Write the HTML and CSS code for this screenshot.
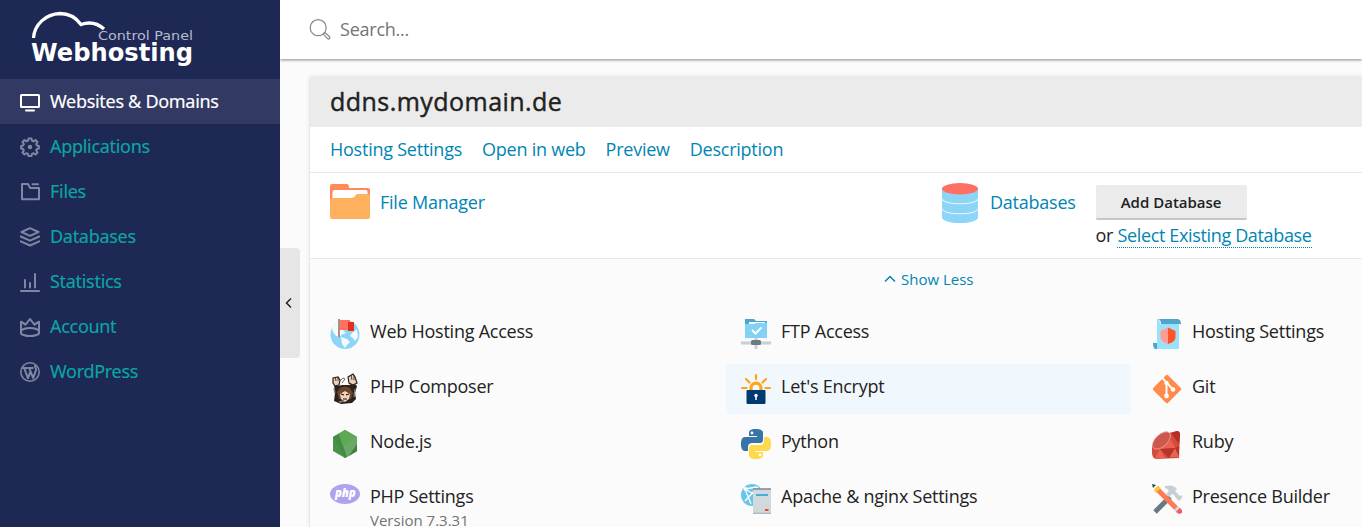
FILE: index.html
```html
<!DOCTYPE html>
<html lang="en">
<head>
<meta charset="utf-8">
<title>Websites &amp; Domains</title>
<link rel="stylesheet" href="styles.css">
</head>
<body>
<div class="app">
  <aside class="sidebar">
    <div class="brand">
      <svg width="280" height="79" viewBox="0 0 280 79">
        <path d="M33.500 38A27.500 26 0 0 1 60 13.500Q73 13.500 81 24.500Q94 20 104 29" fill="none" stroke="#fff" stroke-width="3.300"/>
        <text class="brand-small" x="98" y="39.500" textLength="95" lengthAdjust="spacingAndGlyphs">Control Panel</text>
        <text class="brand-big" x="31" y="61" textLength="162" lengthAdjust="spacingAndGlyphs">Webhosting</text>
      </svg>
    </div>
    <nav class="nav">
      <a class="nav-item active"><svg class="nav-icon" viewBox="0 0 20 20"><rect x="1" y="3" width="18" height="12" rx=".5"/><path d="M6 18.500h8"/></svg><span>Websites &amp; Domains</span></a>
      <a class="nav-item"><svg class="nav-icon" viewBox="0 0 20 20"><path d="M8.500 1.500h3l.5 2.200 1.500.7 2-1.400 2 2-1.300 2 .7 1.500 2 .5v2.500l-2 .5-.7 1.500 1.300 2-2 2-2-1.300-1.500.7-.5 2.100h-3l-.5-2.100-1.500-.7-2 1.300-2-2 1.300-2-.7-1.500-2-.5V9l2-.5.7-1.500-1.300-2 2-2 2 1.400 1.500-.7z"/><circle cx="10" cy="10" r="1.500" fill="currentColor" stroke-width="1.500"/></svg><span>Applications</span></a>
      <a class="nav-item"><svg class="nav-icon" viewBox="0 0 20 20"><path d="M2 17V2h6l2.200 4H19v11.300H2zM12.500 2.200h5.500"/></svg><span>Files</span></a>
      <a class="nav-item"><svg class="nav-icon" viewBox="0 0 20 20"><path d="M10 1.200L18.500 5 10 8.800 1.500 5zM.7 9.500L10 13.700l9.300-4.200M.7 14.300l9.300 4.200 9.300-4.200"/></svg><span>Databases</span></a>
      <a class="nav-item"><svg class="nav-icon" viewBox="0 0 20 20"><path d="M1 19h18M5 8v7.500M10 11v4.500M15 2v13.500"/></svg><span>Statistics</span></a>
      <a class="nav-item"><svg class="nav-icon" viewBox="0 0 20 20"><path d="M1 16.500V4.700l4.500 3L10 2l4.500 5.700 4.500-3v11.800c-3 3.300-15 3.300-18 0z"/><path d="M1 14c3-4 15-4 18 0"/></svg><span>Account</span></a>
      <a class="nav-item"><svg class="nav-icon" viewBox="0 0 20 20"><circle cx="10" cy="10" r="9.200" stroke-width="1.600"/><path d="M2.800 6h4M8.300 6h4.500M4.200 6.200l3.800 10 2.500-6.800M9.300 6.200l3.900 10 2.800-8c.6-2-1-2.600-1-4.200" stroke-width="2"/></svg><span>WordPress</span></a>
    </nav>
  </aside>
  <main class="main">
    <header class="topbar">
      <svg width="22" height="22" viewBox="0 0 22 22" fill="none" stroke="#858585" stroke-width="1.200"><circle cx="9.200" cy="8.700" r="8"/><path d="M15 14.500l1-1 4.500 4.200c1.200 1.200-.7 3-1.900 1.900l-4.400-4.500 1-1"/></svg>
      <span>Search...</span>
    </header>
    <section class="panel">
      <h1 class="panel-title"><span>ddns.mydomain.de</span></h1>
      <div class="links"><a>Hosting Settings</a><a>Open in web</a><a>Preview</a><a>Description</a></div>
      <div class="features">
        <div class="feature">
          <svg class="big-icon" viewBox="0 0 40 40"><path d="M0 3q0-2 2-2h15q2 0 2 4h19q2 0 2 2v15H0z" fill="#ff8a57"/><path d="M2.500 16V9q0-2 2-2h31q2 0 2 2v5z" fill="#fff"/><path d="M0 17q0-2 2-2h20q2 0 3-2 1-2 3-2h10q2 0 2 2v21q0 2-2 2H2q-2 0-2-2z" fill="#ffb05e"/></svg>
          <a>File Manager</a>
        </div>
        <div class="feature">
          <svg class="big-icon" viewBox="0 0 40 40"><path d="M2 6v28c0 8 36 8 36 0V6z" fill="#8cd5f7"/><path d="M2 15.500c0 7 36 7 36 0M2 25.500c0 7 36 7 36 0" fill="none" stroke="#e6f8ff" stroke-width="1.100"/><ellipse cx="20" cy="5.700" rx="18" ry="5.700" fill="#ff6f62"/></svg>
          <a>Databases</a>
          <div class="db-actions">
            <button class="button">Add Database</button>
            <div>or <a class="dotted">Select Existing Database</a></div>
          </div>
        </div>
      </div>
      <div class="toggle"><svg width="12" height="8" viewBox="0 0 12 8"><path d="M1 6.500l5-5 5 5" fill="none" stroke="#0085b3" stroke-width="1.500"/></svg><a>Show Less</a></div>
      <div class="grid">
        <div class="tile">
          <svg class="icon" viewBox="0 0 30 30"><circle cx="15" cy="15.500" r="14.500" fill="#8cd5f7"/><path d="M2 9C4 5 7 3 9 2l4 9 3 3-5 2-1 2-4-1-3-4zM11 18l6 2 3 3-3 3-2 3-3-4zM22 14l5-4 1 8-3 4-2-3-3-2z" fill="#f3fbff"/><path d="M9 0v18" stroke="#a37b68" stroke-width="1.700"/><path d="M10 1h10v10H10z" fill="#ff6f62"/><path d="M18 3h6v9h-6z" fill="#e53018"/></svg>
          <div>Web Hosting Access</div>
        </div>
        <div class="tile">
          <svg class="icon" viewBox="0 0 30 30"><path d="M4 0h9l2 2h11v4H4z" fill="#4ea6cd"/><path d="M8 3h16v3H8z" fill="#fff"/><path d="M4 5h9l2-1h11v15H4z" fill="#82d2f5"/><path d="M11 11l3.500 3.500 6-6" fill="none" stroke="#fff" stroke-width="2"/><path d="M15 19v11M0 24h30" stroke="#c7d0d5" stroke-width="3"/><rect x="10" y="21" width="10" height="5" rx="1.500" fill="#6c7b82"/></svg>
          <div>FTP Access</div>
        </div>
        <div class="tile">
          <svg class="icon" viewBox="0 0 30 30"><path d="M1 24h4v6H3q-2-1-2-6z" fill="#4ea6cd"/><path d="M5 0v30h22V5H8Q8 0 5 0z" fill="#9ce1fb"/><path d="M5 0h21q3 1 3 5H9Q9 0 5 0z" fill="#4ea6cd"/><path d="M16 8.500L8.500 12v6c0 4 4 6 7.500 7z" fill="#ff9d91"/><path d="M16 8.500l7.500 3.500v6c0 4-4 6-7.500 7z" fill="#ff5328"/></svg>
          <div>Hosting Settings</div>
        </div>
        <div class="tile">
          <svg class="icon" viewBox="0 0 30 30"><path d="M4 10l4 2 4-1 7 0 5-2 3 3-2 7 1 6-4 4-11 1-7-3 1-8z" fill="#2b211d"/><path d="M3 4l5-1 2 3-1 5-4 1-2-3zM18 3l5-3 2 3 2 6-4 2-4-2z" fill="#e9cfb7" stroke="#2b211d" stroke-width="1.200"/><path d="M5 3l1 4M8 3v4M21 1l1 5M24 1v5" stroke="#2b211d" stroke-width=".8"/><path d="M7 18l3-4q5-3 10 0l3 5-2 6H9z" fill="#70432d"/><path d="M10 20l5-3 5 3-1 5-4 3-4-3z" fill="#f0d4bd"/><path d="M11 20l3 1M16 21l3-1M13 25h4" stroke="#1a1513" stroke-width="1.200"/><path d="M4 14l1 5M25 15l-1 8M9 28l5-1" stroke="#898078" stroke-width="1.300"/><path d="M10 7l3-3 2 1-3 4" stroke="#666" fill="none"/></svg>
          <div>PHP Composer</div>
        </div>
        <div class="tile highlighted">
          <svg class="icon" viewBox="0 0 30 30"><path d="M15 1v4M5 5l3.500 3.500M25 5l-3.500 3.500M1 14h4.500M24.500 14H29" stroke="#ffa412" stroke-width="2.200" stroke-linecap="round"/><path d="M10 17v-3c0-6.500 10-6.500 10 0v3" fill="none" stroke="#ffa412" stroke-width="3.200"/><rect x="5.500" y="16" width="19" height="14" rx="1" fill="#003a70"/><circle cx="15" cy="21.500" r="1.700" fill="#fff"/><path d="M15 22v4" stroke="#fff" stroke-width="1.500"/></svg>
          <div>Let's Encrypt</div>
        </div>
        <div class="tile">
          <svg class="icon" viewBox="0 0 30 30"><rect x="4.500" y="4.500" width="21" height="21" rx="1.500" transform="rotate(45 15 15)" fill="#ff8a49"/><path d="M10.500 4l4 4.500V23M15 9l5 5.500" fill="none" stroke="#fff" stroke-width="1.900"/><g fill="#fff"><circle cx="14.500" cy="9" r="2.200"/><circle cx="14.500" cy="22" r="2.400"/><circle cx="21" cy="15.500" r="2.300"/></g></svg>
          <div>Git</div>
        </div>
        <div class="tile">
          <svg class="icon" viewBox="0 0 30 30"><path d="M15 1l12 7v14l-12 7-12-7V8z" fill="#48924a"/><path d="M15 1L3 8l12 21 2-1L9 5z" fill="#438d43"/><path d="M15 1L9 5l8 23 10-6V8z" fill="#6aa867"/><path d="M15 1l12 7-14 9L9 5z" fill="#60a953"/><path d="M27 15v7l-8 5z" fill="#3f8040"/></svg>
          <div>Node.js</div>
        </div>
        <div class="tile">
          <svg class="icon" viewBox="0 0 30 30"><path d="M15 0C9 0 8 2 8 4v3h8v1H4c-3 0-4 3-4 7s1 7 4 7h3v-4c0-3 2-4 4-4h8c2 0 3-1 3-3V4c0-3-3-4-7-4z" fill="#3775a9"/><path d="M15 30c6 0 7-2 7-4v-3h-8v-1h12c3 0 4-3 4-7s-1-7-4-7h-3v4c0 3-2 4-4 4h-8c-2 0-3 1-3 3v7c0 3 3 4 7 4z" fill="#ffd94b"/><circle cx="11" cy="4" r="1.400" fill="#fff"/><circle cx="19" cy="26" r="1.400" fill="#fff"/></svg>
          <div>Python</div>
        </div>
        <div class="tile">
          <svg class="icon" viewBox="0 0 30 30"><path d="M0 17L13 5l12-3q3 0 3 4l-1 23-23 1q-4-1-4-6z" fill="#d64b40"/><path d="M19 4l6-2q3 0 3 4l-1 9z" fill="#b52d24"/><path d="M19 11L8 20l15-1zM3 29l5-9 5 9zM23 19l4 9H17z" fill="#e96450"/><path d="M8 20l9 9 6-10zM27 17v10l-4-8z" fill="#b83328"/><ellipse cx="9.500" cy="11.500" rx="11" ry="6" transform="rotate(-43 9.500 11.500)" fill="#cd584f" stroke="#efa397" stroke-width=".8"/></svg>
          <div>Ruby</div>
        </div>
        <div class="tile">
          <svg class="icon" viewBox="0 0 30 30"><ellipse cx="15" cy="10" rx="15" ry="10" fill="#ada4ed"/><text class="php" x="5" y="12.500" textLength="20.500" lengthAdjust="spacingAndGlyphs">php</text></svg>
          <div>PHP Settings<small>Version 7.3.31</small></div>
        </div>
        <div class="tile">
          <svg class="icon" viewBox="0 0 30 30"><circle cx="11" cy="11" r="11" fill="#69c5ea"/><path d="M4 5l12-2M4 5l6 15M4 5l14 8M17 3L4 17" stroke="#fff" stroke-width="1.300"/><circle cx="4.500" cy="5" r="2" fill="#fff"/><rect x="12" y="5" width="18" height="25" fill="#d2d9dd"/><path d="M12 5h18" stroke="#7b898f" stroke-width="1.500"/><path d="M15 11h12" stroke="#48add5" stroke-width="2"/><path d="M12 29.300h18" stroke="#aeb8bd" stroke-width="1.300"/><path d="M24 26h3.500" stroke="#f44431" stroke-width="2"/></svg>
          <div>Apache &amp; nginx Settings</div>
        </div>
        <div class="tile">
          <svg class="icon" viewBox="0 0 30 30"><path d="M3 28L18 13" stroke="#697b82" stroke-width="5"/><path d="M13 2q8-2 12 3l-2 2 5 5 2-1v3l-3 3-3-3-2-3-2-1-3 3-3-3 3-3q-2-3-4-3z" fill="#c7cfd3"/><path d="M4 4l23 23" stroke="#ff7955" stroke-width="5"/><path d="M2 6l4-4 3 2-5 5z" fill="#ffc72b"/><path d="M0 0l4 1-3 3z" fill="#37474f"/><path d="M22 26l4-4 2 2-4 4z" fill="#d4dce0"/><path d="M24 28l4-4 2 2v3l-3 1z" fill="#f45b61"/></svg>
          <div>Presence Builder</div>
        </div>
      </div>
    </section>
    <button class="collapse"><svg width="8" height="12" viewBox="0 0 8 12"><path d="M6 1.500L1.500 6 6 10.500" fill="none" stroke="#222" stroke-width="1.500"/></svg></button>
  </main>
</div>
</body>
</html>
```

FILE: styles.css
```css
* { box-sizing: border-box; }
body { margin: 0; overflow: hidden; font-family: "Open Sans", sans-serif; font-size: 18px; line-height: 24px; letter-spacing: -.24px; color: #222; }
a { color: #0085b3; text-decoration: none; }
.app { display: flex; height: 527px; }
.sidebar { width: 280px; flex: none; background: #1e2854; }
.brand { height: 79px; letter-spacing: 0; }
.brand svg { display: block; }
.brand-small { font: 13px "DejaVu Sans", sans-serif; fill: #b7bbcf; }
.brand-big { font: bold 25px "DejaVu Sans", sans-serif; fill: #fff; }
.nav-item { display: flex; align-items: center; gap: 10px; height: 45px; padding-left: 20px; font-family: "Noto Sans", sans-serif; font-size: 18px; letter-spacing: -.3px; color: #0ba5a4; }
.nav-item span { padding-bottom: 2px; -webkit-text-stroke: .15px currentColor; }
.nav-item.active { background: #323a63; color: #fff; }
.nav-icon { width: 20px; height: 20px; color: #8087a3; fill: none; stroke: currentColor; stroke-width: 2; stroke-linejoin: round; stroke-linecap: round; }
.active .nav-icon { color: #fff; }
.main { flex: 1; min-width: 0; position: relative; background: #fbfbfb; overflow: hidden; }
.topbar { position: relative; height: 59px; padding: 0 0 2px 29px; display: flex; align-items: center; gap: 9px; background: #fff; color: #757575; box-shadow: 0 1px 3px rgba(0,0,0,.45); }
.topbar svg { margin-top: 2px; }
.panel { width: 1240px; margin: 17px 0 0 29px; padding-bottom: 30px; border-left: 1px solid #e8e8e8; border-radius: 4px 0 0 0; box-shadow: 0 0 4px rgba(0,0,0,.08); }
.panel-title { margin: 0; height: 51px; padding: 0 0 2px 20px; display: flex; align-items: center; background: #ebebeb; border-radius: 4px 0 0 0; font-size: 25px; font-weight: 400; letter-spacing: .46px; -webkit-text-stroke: .45px #222; }
.links { height: 46px; padding: 0 0 2px 20px; display: flex; align-items: center; gap: 20px; background: #fff; border-bottom: 1px solid #e8e8e8; }
.features { height: 86px; padding: 9px 0 0 20px; display: grid; grid-template-columns: 610px 1fr; background: #fff; border-bottom: 1px solid #e8e8e8; }
.feature { display: flex; align-items: flex-start; gap: 10px; }
.feature > a { margin-top: 8px; }
.big-icon { width: 40px; height: 40px; margin-top: 1px; }
.db-actions { margin: 3px 0 0 10px; letter-spacing: -.35px; }
.button { display: block; width: 151px; height: 35px; margin-bottom: 3px; border: 0; border-bottom: 2px solid #c7c7c7; border-radius: 2px; background: #ebebeb; color: #222; font: 600 15px "Open Sans", sans-serif; }
.dotted { display: inline-block; height: 25px; border-bottom: 1px dotted #0085b3; }
.toggle { height: 41px; padding: 0 0 2px 574px; display: flex; align-items: center; gap: 5px; font-size: 15px; letter-spacing: 0; }
.grid { padding: 9px 0 0 5px; display: grid; grid-template-columns: repeat(3, 405px); gap: 5px 6px; }
.tile { height: 50px; padding: 10px 15px; display: flex; gap: 10px; white-space: nowrap; }
.highlighted { background: #f0f8fd; }
.icon { width: 30px; height: 30px; flex: none; overflow: visible; }
small { display: block; font-size: 15px; letter-spacing: 0; color: #737373; }
.php { font: italic 900 12px "Open Sans", sans-serif; fill: #fff; }
.collapse { position: absolute; left: 0; top: 248px; width: 20px; height: 110px; padding: 0 0 0 5px; border: 0; border-radius: 0 4px 4px 0; background: #e6e6e6; display: flex; align-items: center; }
```
